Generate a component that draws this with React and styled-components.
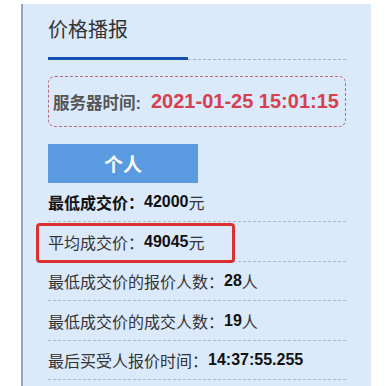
import React from 'react';
import styled, { createGlobalStyle } from 'styled-components';

const GlobalStyle = createGlobalStyle`
  html, body {
    margin: 0;
    padding: 0;
    background: #ffffff;
  }
  body {
    font-family: "Liberation Sans", "Noto Sans CJK SC", sans-serif;
  }
`;

const stats = [
  { label: '最低成交价：', value: '42000', unit: '元', strong: true },
  { label: '平均成交价：', value: '49045', unit: '元', marked: true },
  { label: '最低成交价的报价人数：', value: '28', unit: '人' },
  { label: '最低成交价的成交人数：', value: '19', unit: '人' },
  { label: '最后买受人报价时间：', value: '14:37:55.255', unit: '' },
];

const App = () => {
  return (
    <>
      <GlobalStyle />
      <Page>
        <Panel>
          <TitleBar>
            <ActiveTab>价格播报</ActiveTab>
            <TabRest />
          </TitleBar>

          <ServerBox>
            <ServerLabel>服务器时间:</ServerLabel>
            <ServerTime>2021-01-25 15:01:15</ServerTime>
          </ServerBox>

          <TypeButton>个人</TypeButton>

          <StatList>
            {stats.map((s, i) => (
              <StatRow key={i} $first={i === 0}>
                <StatLabel $strong={s.strong}>{s.label}</StatLabel>
                <StatValue>{s.value}</StatValue>
                {s.unit && <StatUnit>{s.unit}</StatUnit>}
                {s.marked && <Highlight />}
              </StatRow>
            ))}
          </StatList>
        </Panel>
      </Page>
    </>
  );
};

export default App;

const Page = styled.div`
  width: 390px;
  height: 386px;
  padding: 4px 0 0 21px;
  box-sizing: border-box;
  overflow: hidden;
`;

const Panel = styled.div`
  width: 350px;
  height: 382px;
  box-sizing: border-box;
  background: #dbeafb;
  border-left: 2px solid #8ea8c6;
  padding: 0 25px;
`;

const TitleBar = styled.div`
  display: flex;
`;

const ActiveTab = styled.div`
  width: 140px;
  height: 53px;
  line-height: 53px;
  font-size: 20px;
  color: #333;
  border-bottom: 3px solid #1552b3;
`;

const TabRest = styled.div`
  flex: 1;
  border-bottom: 1px dashed #a8b2bf;
`;

const ServerBox = styled.div`
  margin-top: 16px;
  height: 51px;
  box-sizing: border-box;
  border: 1px dashed #b86a7c;
  border-radius: 7px;
  display: flex;
  align-items: center;
  padding-left: 4px;
`;

const ServerLabel = styled.span`
  font-size: 16.5px;
  font-weight: bold;
  color: #555;
`;

const ServerTime = styled.span`
  margin-left: 10px;
  font-size: 20px;
  font-weight: bold;
  color: #d6404e;
`;

const TypeButton = styled.div`
  margin-top: 17px;
  width: 150px;
  height: 39px;
  background: #5a9ae0;
  color: #fff;
  font-size: 19px;
  font-weight: bold;
  display: flex;
  align-items: center;
  justify-content: center;
`;

const StatList = styled.div`
  display: flex;
  flex-direction: column;
`;

const StatRow = styled.div`
  position: relative;
  box-sizing: border-box;
  display: flex;
  align-items: center;
  font-size: 16px;
  color: #222;
  border-bottom: 1px dashed #adb6c2;
  padding-top: ${(p) => (p.$first ? '0' : '1px')};
  height: ${(p) => (p.$first ? '39px' : '39.5px')};
`;

const StatLabel = styled.span`
  font-weight: ${(p) => (p.$strong ? 'bold' : 'normal')};
  color: ${(p) => (p.$strong ? '#111' : '#333')};
`;

const StatValue = styled.span`
  font-weight: bold;
  color: #111;
`;

const StatUnit = styled.span`
  color: #333;
`;

const Highlight = styled.div`
  position: absolute;
  left: -12px;
  top: 1px;
  width: 199px;
  height: 40px;
  box-sizing: border-box;
  border: 3px solid #d93030;
  border-radius: 4px;
  pointer-events: none;
`;
